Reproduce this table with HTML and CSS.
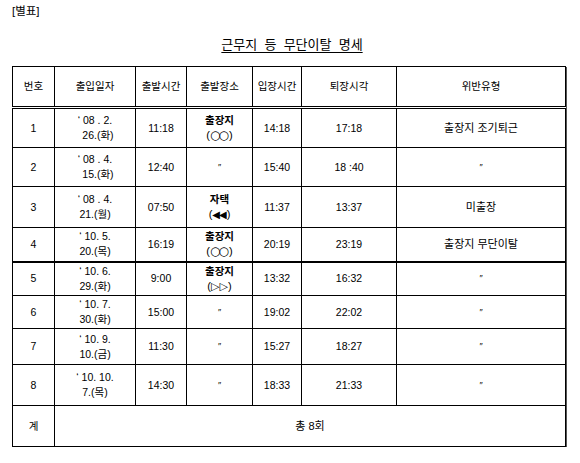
FILE: index.html
```html
<!DOCTYPE html>
<html lang="ko">
<head>
<meta charset="utf-8">
<link rel="stylesheet" href="styles.css">
</head>
<body>
<div class="page">
  <div class="tag">[별표]</div>
  <h1 class="title"><span>근무지&nbsp; 등&nbsp; 무단이탈&nbsp; 명세</span></h1>
  <table class="grid">
    <colgroup>
      <col class="c1"><col class="c2"><col class="c3"><col class="c4"><col class="c5"><col class="c6"><col class="c7">
    </colgroup>
    <thead>
      <tr class="h-head">
        <th>번호</th><th>출입일자</th><th>출발시간</th><th>출발장소</th><th>입장시간</th><th>퇴장시각</th><th>위반유형</th>
      </tr>
    </thead>
    <tbody>
      <tr class="h40">
        <td>1</td>
        <td class="date">‘ 08 . 2.<br>&nbsp;&nbsp;26.(화)</td>
        <td>11:18</td>
        <td class="place"><b>출장지</b><br><span class="sym">(<span class="oo">○○</span>)</span></td>
        <td>14:18</td><td>17:18</td><td class="type">출장지 조기퇴근</td>
      </tr>
      <tr class="h39">
        <td>2</td>
        <td class="date">‘ 08 . 4.<br>&nbsp;&nbsp;15.(화)</td>
        <td>12:40</td>
        <td class="ditto">″</td>
        <td>15:40</td><td>18 :40</td><td class="ditto">″</td>
      </tr>
      <tr class="h41">
        <td>3</td>
        <td class="date">‘ 08 . 4.<br>21.(월)</td>
        <td>07:50</td>
        <td class="place"><b>자택</b><br><span class="sym">(<span class="tri">◀◀</span>)</span></td>
        <td>11:37</td><td>13:37</td><td class="type">미출장</td>
      </tr>
      <tr class="h34">
        <td>4</td>
        <td class="date">‘ 10. 5.<br>20.(목)</td>
        <td>16:19</td>
        <td class="place"><b>출장지</b><br><span class="sym">(<span class="oo">○○</span>)</span></td>
        <td>20:19</td><td>23:19</td><td class="type">출장지 무단이탈</td>
      </tr>
      <tr class="h34 topline">
        <td>5</td>
        <td class="date">‘ 10. 6.<br>29.(화)</td>
        <td>9:00</td>
        <td class="place"><b>출장지</b><br><span class="sym">(<span class="tri2">▷▷</span>)</span></td>
        <td>13:32</td><td>16:32</td><td class="ditto">″</td>
      </tr>
      <tr class="h33">
        <td>6</td>
        <td class="date">‘ 10. 7.<br>30.(화)</td>
        <td>15:00</td>
        <td class="ditto">″</td>
        <td>19:02</td><td>22:02</td><td class="ditto">″</td>
      </tr>
      <tr class="h36">
        <td>7</td>
        <td class="date">‘ 10. 9.<br>10.(금)</td>
        <td>11:30</td>
        <td class="ditto">″</td>
        <td>15:27</td><td>18:27</td><td class="ditto">″</td>
      </tr>
      <tr class="h41">
        <td>8</td>
        <td class="date">‘ 10. 10.<br>7.(목)</td>
        <td>14:30</td>
        <td class="ditto">″</td>
        <td>18:33</td><td>21:33</td><td class="ditto">″</td>
      </tr>
      <tr class="h41">
        <td>계</td>
        <td colspan="6" class="type">총 8회</td>
      </tr>
    </tbody>
  </table>
</div>
</body>
</html>
```

FILE: styles.css
```css
html, body {
  margin: 0;
  padding: 0;
  background: #fff;
}
body {
  font-family: "Liberation Sans", "Noto Sans CJK KR", sans-serif;
  color: #000;
  font-size: 10.5px;
}
.page {
  padding: 4px 0 0 12px;
}
.tag {
  font-size: 11.5px;
  line-height: 14px;
}
.title {
  margin: 19px 0 0 0;
  width: 560px;
  text-align: center;
  font-size: 13px;
  font-weight: normal;
  line-height: 16px;
}
.title span {
  text-decoration: underline;
  text-underline-offset: 3px;
}
.grid {
  margin-top: 13px;
  border-collapse: collapse;
  table-layout: fixed;
  width: 553px;
  border: 1px solid #000;
  box-shadow: 1px 1px 0 #555;
}
.c1 { width: 42px; }
.c2 { width: 81px; }
.c3 { width: 51px; }
.c4 { width: 66px; }
.c5 { width: 49px; }
.c6 { width: 95px; }
.c7 { width: 169px; }
.grid th, .grid td {
  border: 1px solid #000;
  padding: 0;
  text-align: center;
  vertical-align: middle;
  font-weight: normal;
  line-height: 15px;
}
.grid thead th {
  border-bottom: 3px double #000;
}
.h-head { height: 41px; }
.h40 { height: 40px; }
.h39 { height: 39px; }
.h41 { height: 41px; }
.h34 { height: 34px; }
.h33 { height: 33px; }
.h36 { height: 36px; }
.topline td { border-top: 2px solid #000; }
.date {
  line-height: 16px;
}
.place b {
  font-weight: bold;
}
.sym {
  font-size: 11px;
}
.oo {
  font-family: "DejaVu Sans", sans-serif;
  font-size: 12px;
  letter-spacing: -2px;
  margin-right: 2px;
}
.tri {
  font-family: "DejaVu Sans", sans-serif;
  font-size: 10px;
  letter-spacing: -1px;
  margin-right: 1px;
}
.tri2 {
  font-family: "DejaVu Sans", sans-serif;
  font-size: 11px;
  letter-spacing: 0;
}
.ditto {
  font-size: 9px;
}
.type {
  font-size: 11px;
}
```
